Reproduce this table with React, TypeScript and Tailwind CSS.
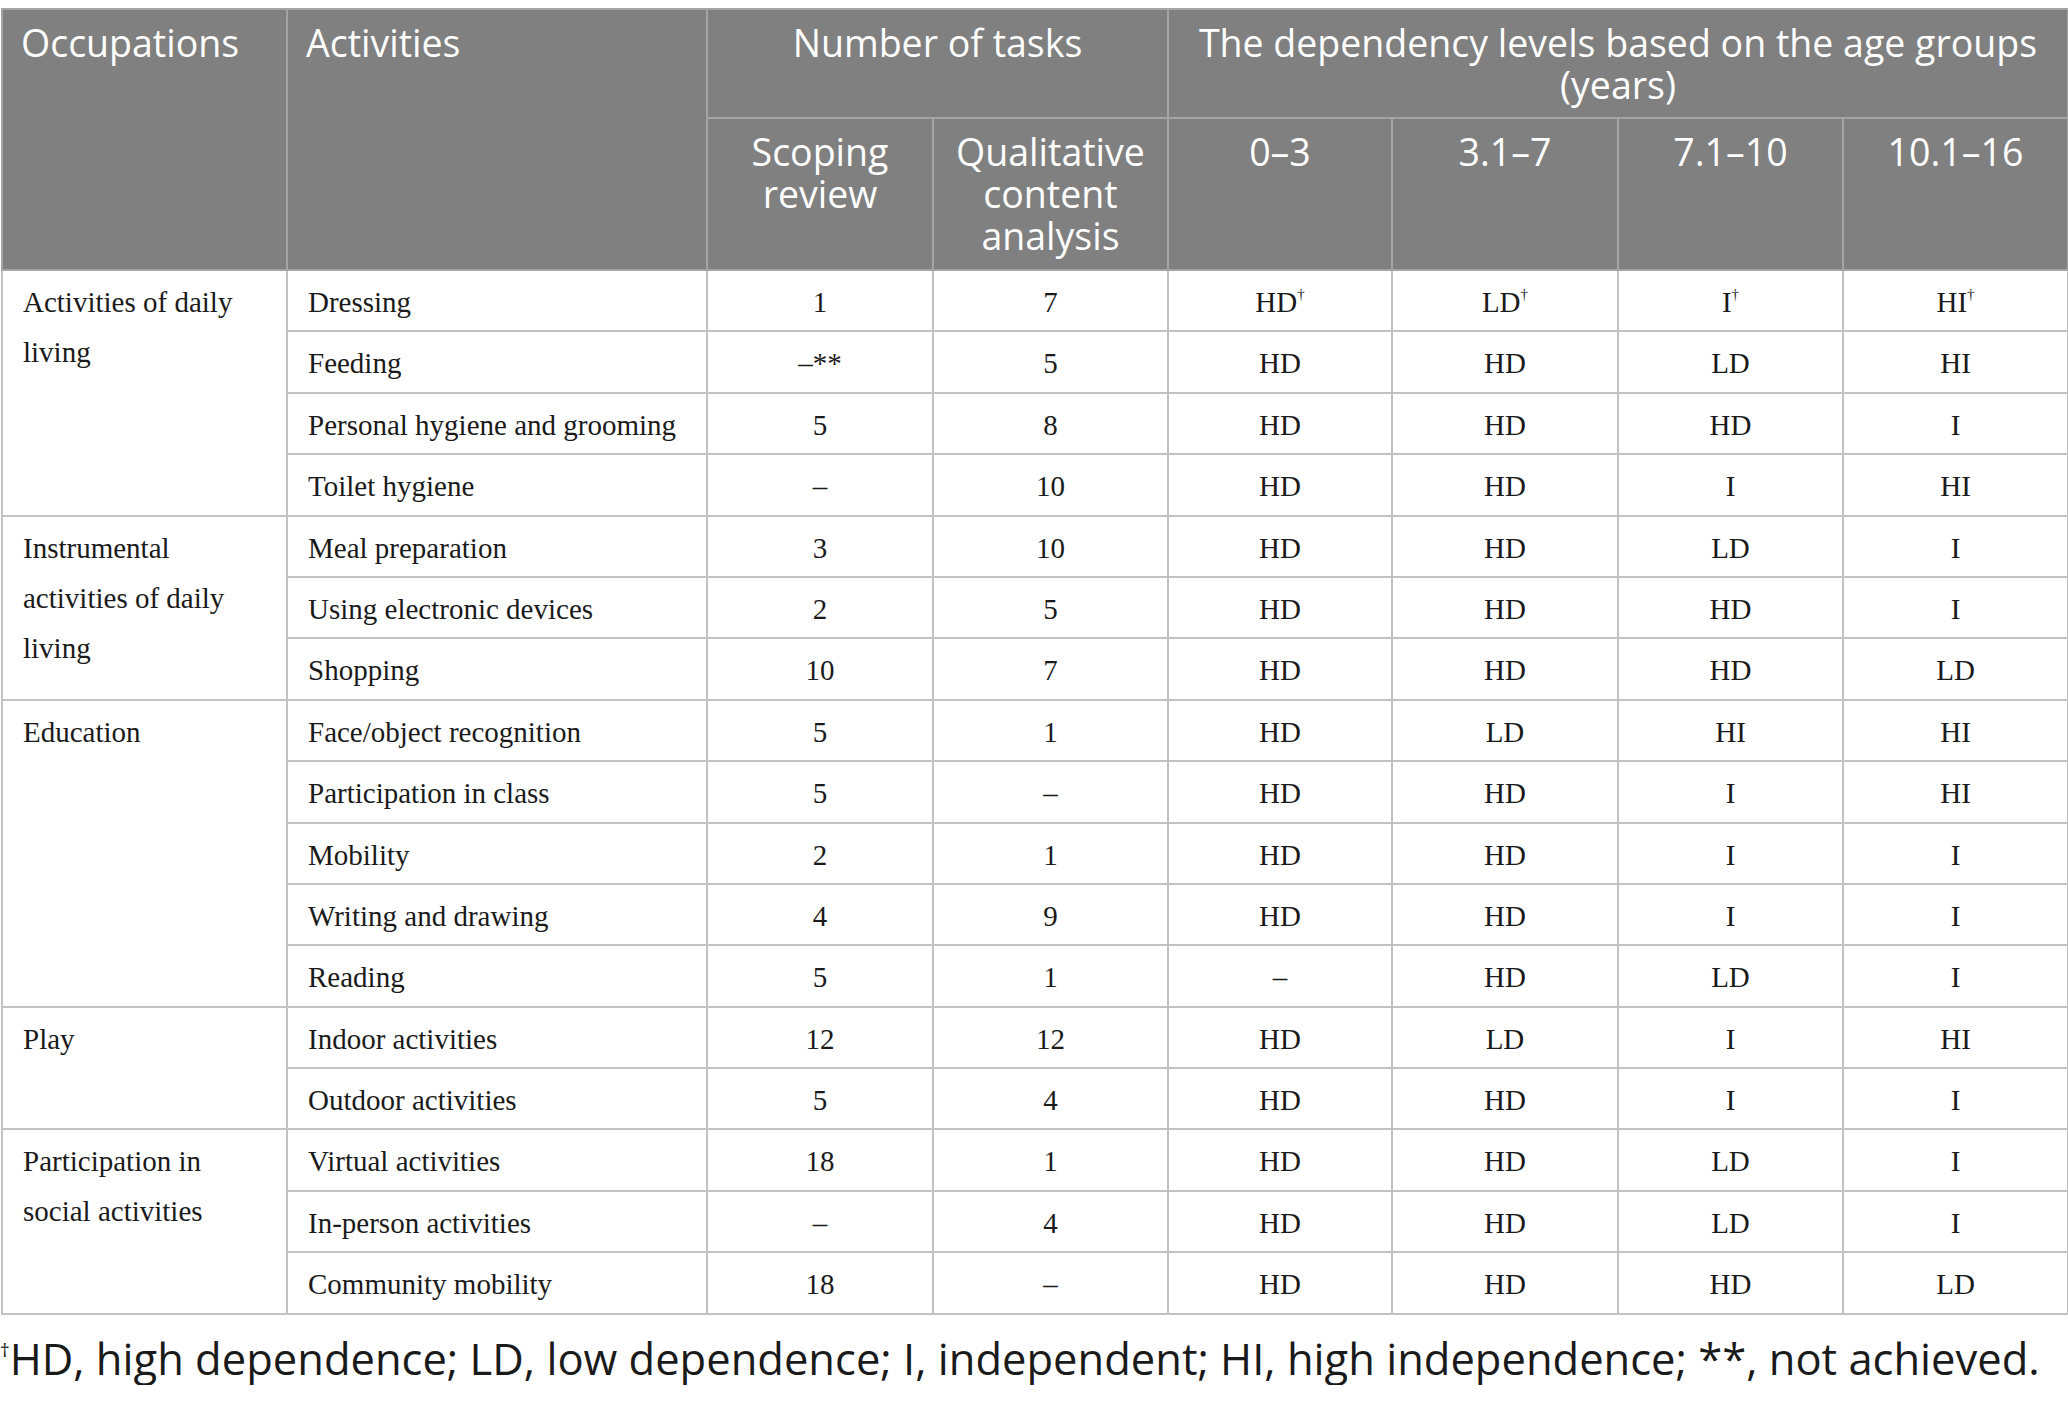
import React from "react";

type Row = {
  activity: string;
  scoping: string;
  qualitative: string;
  levels: string[];
  mark?: boolean;
};

type Group = {
  occupation: string;
  rows: Row[];
};

const GROUPS: Group[] = [
  {
    occupation: "Activities of daily living",
    rows: [
      { activity: "Dressing", scoping: "1", qualitative: "7", levels: ["HD", "LD", "I", "HI"], mark: true },
      { activity: "Feeding", scoping: "–**", qualitative: "5", levels: ["HD", "HD", "LD", "HI"] },
      { activity: "Personal hygiene and grooming", scoping: "5", qualitative: "8", levels: ["HD", "HD", "HD", "I"] },
      { activity: "Toilet hygiene", scoping: "–", qualitative: "10", levels: ["HD", "HD", "I", "HI"] },
    ],
  },
  {
    occupation: "Instrumental activities of daily living",
    rows: [
      { activity: "Meal preparation", scoping: "3", qualitative: "10", levels: ["HD", "HD", "LD", "I"] },
      { activity: "Using electronic devices", scoping: "2", qualitative: "5", levels: ["HD", "HD", "HD", "I"] },
      { activity: "Shopping", scoping: "10", qualitative: "7", levels: ["HD", "HD", "HD", "LD"] },
    ],
  },
  {
    occupation: "Education",
    rows: [
      { activity: "Face/object recognition", scoping: "5", qualitative: "1", levels: ["HD", "LD", "HI", "HI"] },
      { activity: "Participation in class", scoping: "5", qualitative: "–", levels: ["HD", "HD", "I", "HI"] },
      { activity: "Mobility", scoping: "2", qualitative: "1", levels: ["HD", "HD", "I", "I"] },
      { activity: "Writing and drawing", scoping: "4", qualitative: "9", levels: ["HD", "HD", "I", "I"] },
      { activity: "Reading", scoping: "5", qualitative: "1", levels: ["–", "HD", "LD", "I"] },
    ],
  },
  {
    occupation: "Play",
    rows: [
      { activity: "Indoor activities", scoping: "12", qualitative: "12", levels: ["HD", "LD", "I", "HI"] },
      { activity: "Outdoor activities", scoping: "5", qualitative: "4", levels: ["HD", "HD", "I", "I"] },
    ],
  },
  {
    occupation: "Participation in social activities",
    rows: [
      { activity: "Virtual activities", scoping: "18", qualitative: "1", levels: ["HD", "HD", "LD", "I"] },
      { activity: "In-person activities", scoping: "–", qualitative: "4", levels: ["HD", "HD", "LD", "I"] },
      { activity: "Community mobility", scoping: "18", qualitative: "–", levels: ["HD", "HD", "HD", "LD"] },
    ],
  },
];

const sans = "font-['Open_Sans','Noto_Sans',sans-serif]";
const th = "border-2 border-[#a3a4a3] align-top font-normal text-white text-[37.5px] leading-[42px] pt-[12px] px-[8px]";
const td = "border-2 border-[#c2c2c2] align-top h-[61.4px] pt-[6px] px-[20px] leading-[50px]";

function Dagger() {
  return <sup className="text-[15px] top-[-0.9em]">†</sup>;
}

export default function App(): React.JSX.Element {
  return (
    <div className="w-[2068px] bg-white pt-[8px] text-[#1a1a1a]">
      <table className="w-[2066px] ml-px border-collapse table-fixed border-2 border-[#c2c2c2]">
        <colgroup>
          <col className="w-[285px]" />
          <col className="w-[420px]" />
          <col className="w-[226px]" />
          <col className="w-[235px]" />
          <col className="w-[224px]" />
          <col className="w-[226px]" />
          <col className="w-[225px]" />
          <col className="w-[225px]" />
        </colgroup>
        <thead className={`bg-[#7f807f] ${sans}`}>
          <tr className="h-[109px]">
            <th rowSpan={2} className={`${th} text-left pl-[18px]`}>
              Occupations
            </th>
            <th rowSpan={2} className={`${th} text-left pl-[18px]`}>
              Activities
            </th>
            <th colSpan={2} className={`${th} text-center`}>
              Number of tasks
            </th>
            <th colSpan={4} className={`${th} text-center`}>
              The dependency levels based on the age groups (years)
            </th>
          </tr>
          <tr className="h-[152px]">
            <th className={`${th} text-center px-[16px]`}>Scoping review</th>
            <th className={`${th} text-center px-[16px]`}>Qualitative content analysis</th>
            <th className={`${th} text-center`}>0–3</th>
            <th className={`${th} text-center`}>3.1–7</th>
            <th className={`${th} text-center`}>7.1–10</th>
            <th className={`${th} text-center`}>10.1–16</th>
          </tr>
        </thead>
        <tbody className="font-['Liberation_Serif','Times_New_Roman',serif] text-[29px]">
          {GROUPS.map((group) =>
            group.rows.map((row, i) => (
              <tr key={row.activity}>
                {i === 0 && (
                  <td rowSpan={group.rows.length} className={`${td} text-left pr-[12px]`}>
                    {group.occupation}
                  </td>
                )}
                <td className={`${td} text-left`}>{row.activity}</td>
                <td className={`${td} text-center`}>{row.scoping}</td>
                <td className={`${td} text-center`}>{row.qualitative}</td>
                {row.levels.map((level, j) => (
                  <td key={j} className={`${td} text-center`}>
                    {level}
                    {row.mark && <Dagger />}
                  </td>
                ))}
              </tr>
            )),
          )}
        </tbody>
      </table>

      {/* Footnote */}
      <p className={`${sans} text-[43.5px] leading-[52px] mt-[18px] whitespace-nowrap`}>
        <sup className="text-[19px] top-[-0.95em]">†</sup>
        HD, high dependence; LD, low dependence; I, independent; HI, high independence; **, not achieved.
      </p>
    </div>
  );
}
